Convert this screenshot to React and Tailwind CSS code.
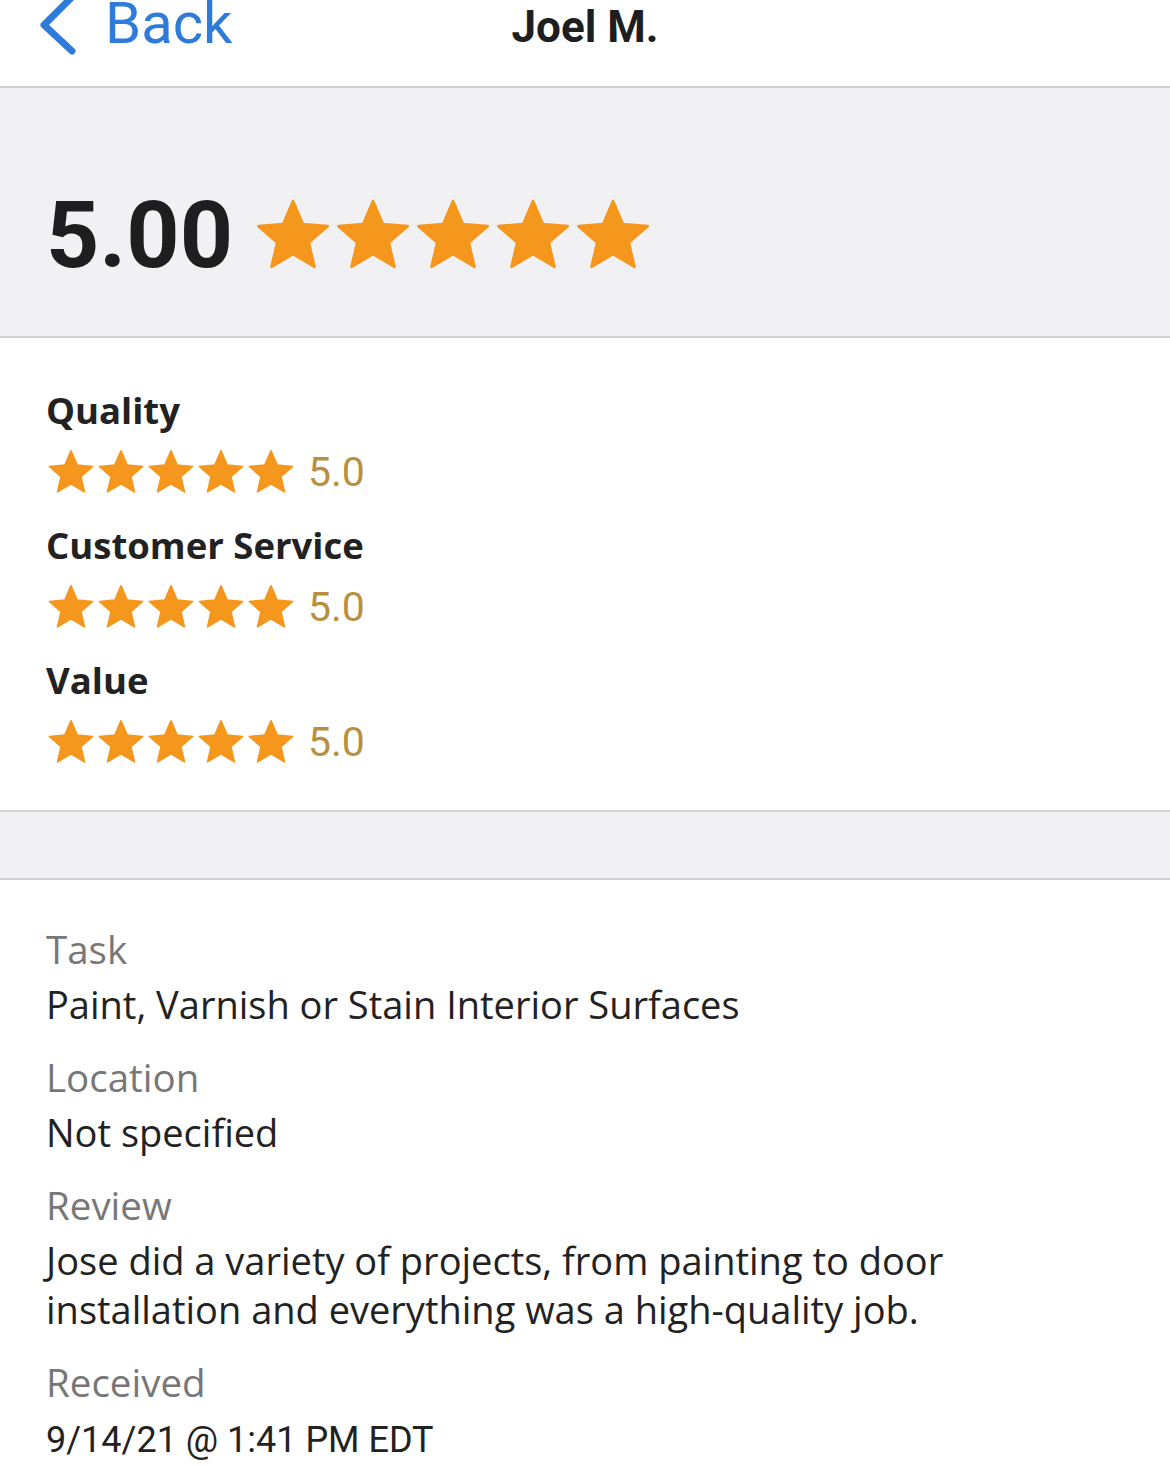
import React from 'react';

const roboto = { fontFamily: 'Roboto, "Liberation Sans", sans-serif' };
const openSans = { fontFamily: '"Open Sans", "Noto Sans", sans-serif' };

function Star({ size }) {
    return (
        <svg width={size} height={size} viewBox="0 0 24 24" className="shrink-0">
            <path
                d="M12 1.8l2.95 6.9 7.45.65-5.65 4.9 1.7 7.3L12 17.7l-6.45 3.85 1.7-7.3L1.6 9.35l7.45-.65z"
                fill="#f5961d"
                stroke="#f5961d"
                strokeWidth="0.8"
                strokeLinejoin="round"
            />
        </svg>
    );
}

function Stars({ count = 5, size }) {
    return (
        <div className="flex items-center">
            {Array.from({ length: count }).map((_, i) => (
                <Star key={i} size={size} />
            ))}
        </div>
    );
}

function SubRating({ label, value }) {
    return (
        <div>
            <div className="text-[36.5px] font-bold text-[#222] leading-[44px]" style={openSans}>{label}</div>
            <div className="flex items-center mt-[16px] h-[48px]">
                <Stars size={50} />
                <span className="ml-[12px] text-[41px] text-[#b8903f] leading-none" style={roboto}>{value}</span>
            </div>
        </div>
    );
}

function Field({ label, children, mono }) {
    return (
        <div>
            <div className="text-[38.5px] text-[#777] leading-[49px]" style={openSans}>{label}</div>
            <div
                className={`${mono ? 'text-[36px] mt-[9px]' : 'text-[38px] mt-[6px]'} text-[#222] leading-[49px]`}
                style={mono ? roboto : openSans}
            >
                {children}
            </div>
        </div>
    );
}

export default function App() {
    return (
        <div className="w-[1170px] h-[1466px] bg-white overflow-hidden" style={roboto}>
            {/* Nav bar */}
            <div className="h-[88px] border-b-2 border-[#cfcfd2] flex items-start relative">
                <div className="flex items-start -mt-[6px] pl-[37px]">
                    <svg width="40" height="60" viewBox="0 0 40 60" className="mt-[1px]">
                        <path d="M35 2 L7 30 L35 56" fill="none" stroke="#2f7bd9" strokeWidth="7" strokeLinecap="round" strokeLinejoin="round" />
                    </svg>
                    <span className="ml-[28px] text-[58px] leading-none text-[#2f7bd9]">Back</span>
                </div>
                <div className="absolute left-0 right-0 top-[5px] text-center text-[44px] leading-none font-bold text-[#1e1e1e]">
                    Joel M.
                </div>
            </div>

            {/* Overall */}
            <div className="h-[250px] bg-[#f1f1f4] border-b-2 border-[#d2d2d5] flex items-center pl-[46px] pt-[46px]">
                <span className="text-[93px] font-bold text-[#1e1e1e] leading-none">5.00</span>
                <div className="ml-[20px]">
                    <Stars size={80} />
                </div>
            </div>

            {/* Sub ratings */}
            <div className="pl-[46px] pt-[50px] pb-[44px] flex flex-col gap-[27px]">
                <SubRating label="Quality" value="5.0" />
                <SubRating label="Customer Service" value="5.0" />
                <SubRating label="Value" value="5.0" />
            </div>

            <div className="h-[70px] bg-[#f1f1f4] border-y-2 border-[#d2d2d5]" />

            {/* Details */}
            <div className="pl-[46px] pt-[45px] flex flex-col gap-[24px]">
                <Field label="Task">Paint, Varnish or Stain Interior Surfaces</Field>
                <Field label="Location">Not specified</Field>
                <Field label="Review">
                    Jose did a variety of projects, from painting to door
                    <br />
                    installation and everything was a high-quality job.
                </Field>
                <Field label="Received" mono>9/14/21 @ 1:41 PM EDT</Field>
            </div>
        </div>
    );
}
